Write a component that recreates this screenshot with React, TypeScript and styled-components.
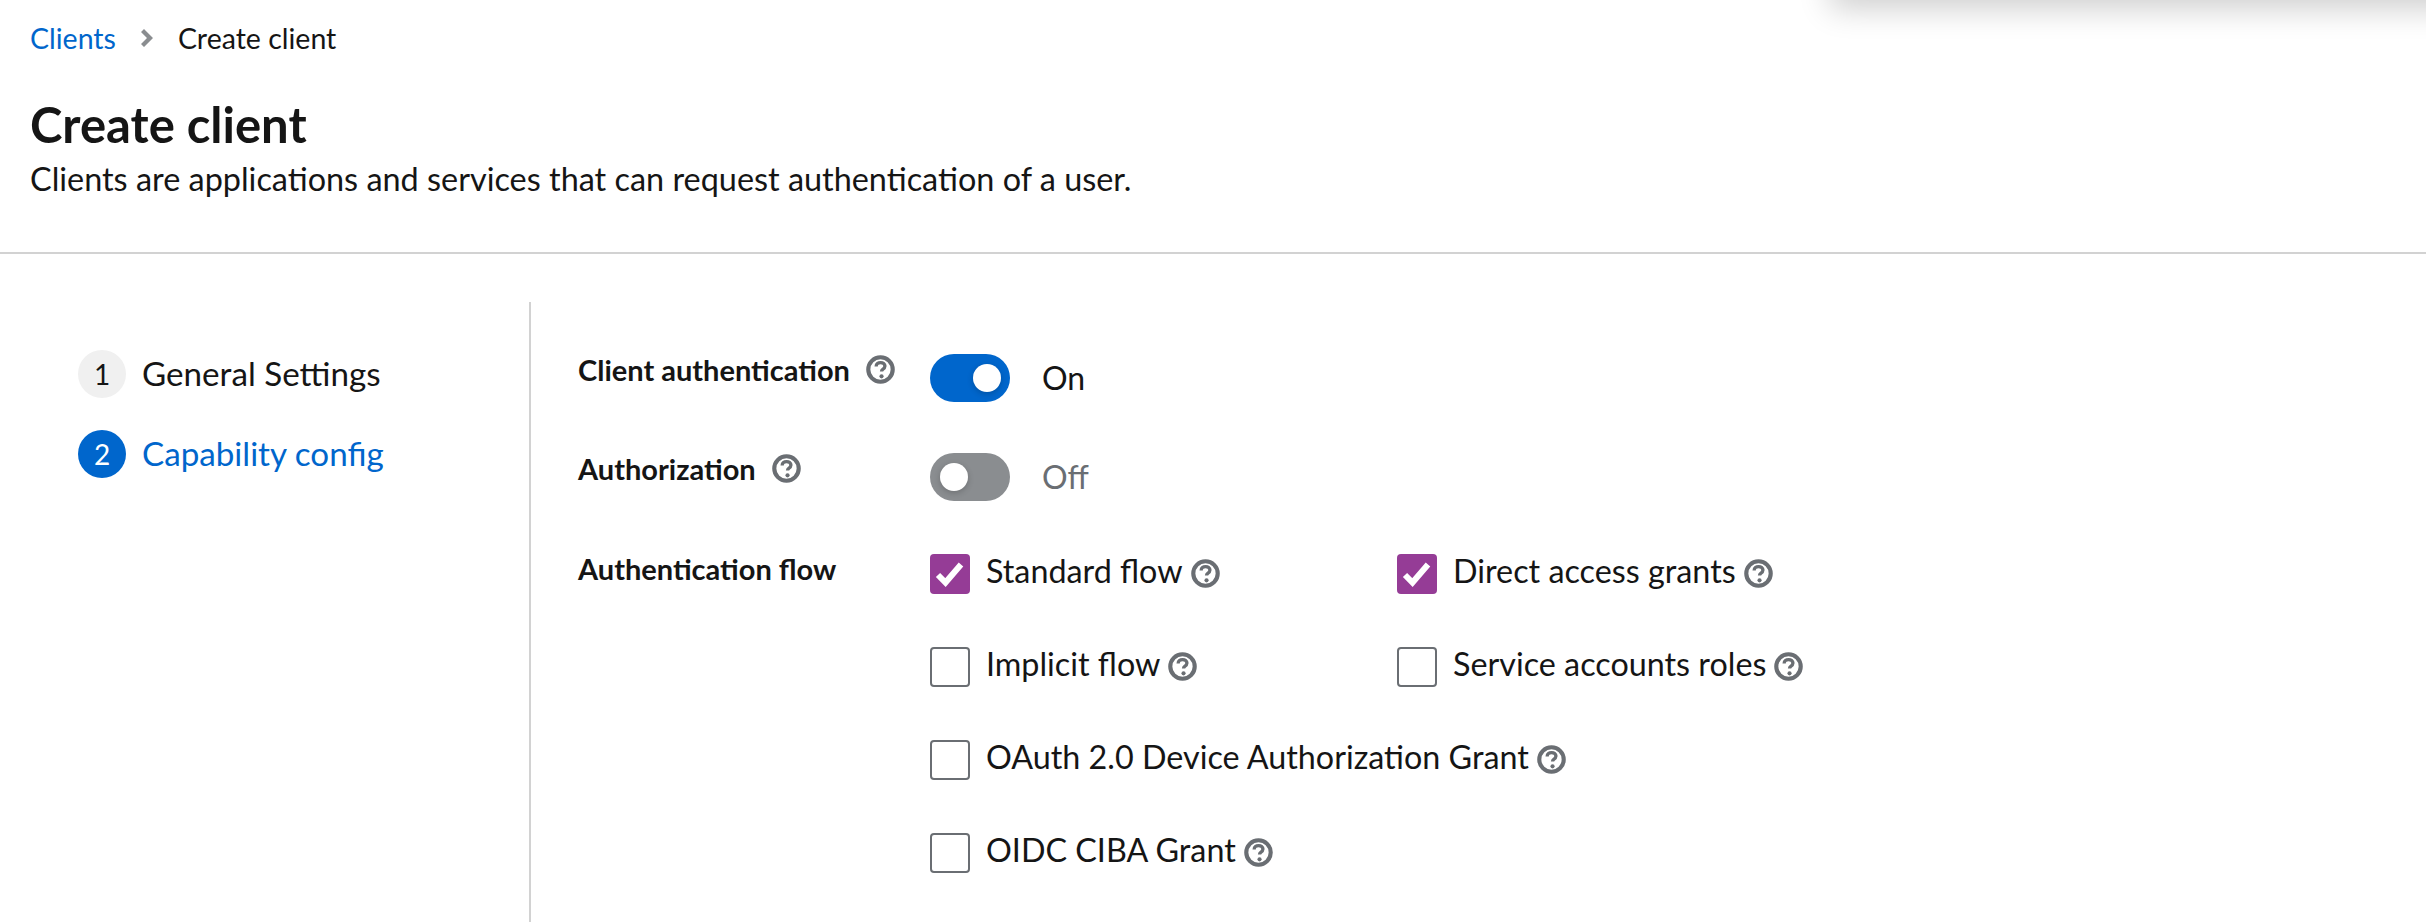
import React from "react";
import styled, { createGlobalStyle } from "styled-components";

const Global = createGlobalStyle`
  html, body { margin: 0; padding: 0; background: #fff; }
  body { font-family: "Lato", "Liberation Sans", sans-serif; color: #151515; overflow: hidden; }
  #root { height: 922px; }
`;

const Page = styled.div`
  position: relative;
  height: 922px;
  width: 2426px;
  overflow: hidden;
  display: flex;
  flex-direction: column;
`;
const Shadow = styled.div`
  position: absolute;
  left: 1830px;
  right: -40px;
  top: -40px;
  height: 40px;
  box-shadow: 0 8px 32px rgba(3, 3, 3, 0.2);
`;
const Header = styled.header`
  height: 254px;
  box-sizing: border-box;
  padding: 20px 30px 0;
  border-bottom: 2px solid #d2d2d2;
  flex: none;
`;
const Crumbs = styled.nav`
  display: flex;
  align-items: center;
  height: 36px;
  font-size: 28.5px;
`;
const CrumbLink = styled.a`
  color: #06c;
`;
const CrumbSep = styled.svg`
  width: 12px;
  height: 18px;
  margin: 0 25px;
  fill: #8a8d90;
`;
const Title = styled.h1`
  margin: 41px 0 0;
  font-size: 49px;
  line-height: 54px;
  font-weight: 700;
  color: #151515;
`;
const Desc = styled.p`
  margin: 7px 0 0;
  font-size: 32.4px;
  line-height: 42px;
`;
const Body = styled.div`
  flex: 1;
  display: flex;
  padding-top: 48px;
`;
const Side = styled.aside`
  width: 531px;
  box-sizing: border-box;
  padding: 48px 0 0 78px;
  border-right: 2px solid #d2d2d2;
  display: flex;
  flex-direction: column;
  gap: 32px;
`;
const Step = styled.div`
  display: flex;
  align-items: center;
  gap: 16px;
  font-size: 33.2px;
  height: 48px;
  color: ${(p) => (p.$active ? "#06c" : "#151515")};
`;
const StepName = styled.span`
  position: relative;
  top: -1px;
`;
const StepNum = styled.span`
  width: 48px;
  height: 48px;
  border-radius: 50%;
  display: flex;
  align-items: center;
  justify-content: center;
  font-size: 28px;
  background: ${(p) => (p.$active ? "#06c" : "#f0f0f0")};
  color: ${(p) => (p.$active ? "#fff" : "#151515")};
`;
const Form = styled.main`
  flex: 1;
  padding: 47.5px 0 0 47px;
  display: grid;
  grid-template-columns: 352px 1fr;
  grid-auto-rows: min-content;
  row-gap: 47px;
`;
const Label = styled.div`
  display: flex;
  align-items: center;
  gap: 16px;
  height: 40px;
  margin-top: ${(p) => p.$top ?? 0}px;
  font-size: 29px;
  font-weight: 700;
  color: #151515;
`;
const Control = styled.div`
  display: flex;
  align-items: center;
  gap: 32px;
  height: 48px;
  margin-top: 4px;
  font-size: 32px;
  color: ${(p) => (p.$off ? "#6a6e73" : "#151515")};
`;
const Track = styled.span`
  position: relative;
  width: 80px;
  height: 48px;
  border-radius: 24px;
  background: ${(p) => (p.$on ? "#06c" : "#8a8d90")};
`;
const Knob = styled.span`
  position: absolute;
  top: 10px;
  left: ${(p) => (p.$on ? "43px" : "10px")};
  width: 28px;
  height: 28px;
  border-radius: 50%;
  background: #fff;
  box-shadow: 0 2px 6px rgba(3, 3, 3, 0.2);
`;
const Flows = styled.div`
  display: grid;
  grid-template-columns: 467px 1fr;
  row-gap: 53px;
  margin-top: 6px;
`;
const Check = styled.label`
  display: flex;
  align-items: center;
  height: 40px;
  font-size: 32.3px;
  white-space: nowrap;
`;
const CheckText = styled.span`
  position: relative;
  top: -3px;
`;
const Box = styled.span`
  width: 40px;
  height: 40px;
  box-sizing: border-box;
  border-radius: 4px;
  margin-right: 16px;
  flex: none;
  display: flex;
  align-items: center;
  justify-content: center;
  background: ${(p) => (p.$checked ? "#953c96" : "#fff")};
  border: ${(p) => (p.$checked ? "none" : "2px solid #6a6e73")};
`;
const HelpIcon = styled.svg`
  width: 29px;
  height: 29px;
  flex: none;
  margin-left: ${(p) => p.$ml ?? 0}px;
`;

const Help = ({ ml }: { ml?: number }) => (
  <HelpIcon $ml={ml} viewBox="0 0 28 28" aria-hidden="true">
    <circle cx="14" cy="14" r="11.8" fill="none" stroke="#6a6e73" strokeWidth="4" />
    <path d="M9.8 11.2c0-2.5 1.9-3.9 4.3-3.9 2.4 0 4.2 1.4 4.2 3.4 0 1.6-1 2.4-2.1 3.1-1 .7-1.2 1.1-1.2 2.2" fill="none" stroke="#6a6e73" strokeWidth="3.2" />
    <circle cx="15" cy="20.6" r="2" fill="#6a6e73" />
  </HelpIcon>
);

const Tick = () => (
  <svg width="30" height="28" viewBox="0 0 30 28" aria-hidden="true">
    <path d="M3 15l7.5 7.5L26 4.5" fill="none" stroke="#fff" strokeWidth="6" />
  </svg>
);

const Flow = ({ label, checked }: { label: string; checked?: boolean }) => (
  <Check>
    <Box $checked={checked}>{checked && <Tick />}</Box>
    <CheckText>{label}</CheckText>
    <Help ml={8} />
  </Check>
);

export default function App() {
  return (
    <Page>
      <Global />
      <Shadow />
      <Header>
        <Crumbs>
          <CrumbLink>Clients</CrumbLink>
          <CrumbSep viewBox="0 0 12 18">
            <path d="M3 0l9 9-9 9-3-3 6-6-6-6z" />
          </CrumbSep>
          <span>Create client</span>
        </Crumbs>
        <Title>Create client</Title>
        <Desc>Clients are applications and services that can request authentication of a user.</Desc>
      </Header>
      <Body>
        <Side>
          <Step>
            <StepNum>1</StepNum>
            <StepName>General Settings</StepName>
          </Step>
          <Step $active>
            <StepNum $active>2</StepNum>
            <StepName>Capability config</StepName>
          </Step>
        </Side>
        <Form>
          <Label>Client authentication<Help /></Label>
          <Control>
            <Track $on><Knob $on /></Track>On
          </Control>
          <Label>Authorization<Help /></Label>
          <Control $off>
            <Track><Knob /></Track>Off
          </Control>
          <Label $top={1}>Authentication flow</Label>
          <Flows>
            <Flow label="Standard flow" checked />
            <Flow label="Direct access grants" checked />
            <Flow label="Implicit flow" />
            <Flow label="Service accounts roles" />
            <Flow label="OAuth 2.0 Device Authorization Grant" />
            <span />
            <Flow label="OIDC CIBA Grant" />
          </Flows>
        </Form>
      </Body>
    </Page>
  );
}
